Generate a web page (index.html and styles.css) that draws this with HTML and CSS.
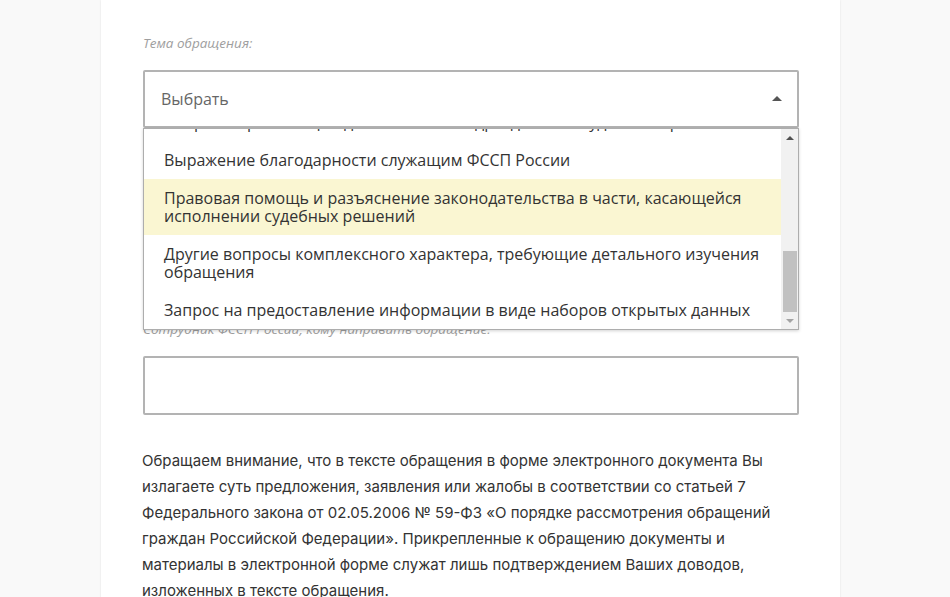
FILE: index.html
```html
<!DOCTYPE html>
<html lang="ru">
<head>
<meta charset="utf-8">
<title>Обращение</title>
<link rel="stylesheet" href="styles.css">
</head>
<body>
<div class="page">
  <div class="card">
    <div class="field">
      <div class="label">Тема обращения:</div>
      <div class="select-wrap">
        <div class="select">
          <span class="select-text">Выбрать</span>
          <span class="caret"></span>
        </div>
        <div class="dropdown">
          <ul class="options" id="options">
            <li class="option">Вопросы исполнительного производства</li>
            <li class="option">Обжалование действий (бездействия) должностных лиц ФССП России</li>
            <li class="option">Вопросы прохождения государственной службы в ФССП России</li>
            <li class="option">Сообщение о фактах коррупции в действиях должностных лиц ФССП России</li>
            <li class="option">Предложения по совершенствованию деятельности ФССП России</li>
            <li class="option">Вопросы организации деятельности подразделений судебных приставов</li>
            <li class="option">Выражение благодарности служащим ФССП России</li>
            <li class="option active">Правовая помощь и разъяснение законодательства в части, касающейся исполнении судебных решений</li>
            <li class="option">Другие вопросы комплексного характера, требующие детального изучения обращения</li>
            <li class="option">Запрос на предоставление информации в виде наборов открытых данных</li>
          </ul>
          <div class="scrollbar">
            <div class="sb-btn"><span class="sb-up"></span></div>
            <div class="sb-track"><div class="sb-thumb"></div></div>
            <div class="sb-btn"><span class="sb-down"></span></div>
          </div>
        </div>
      </div>
    </div>

    <div class="field field-second">
      <div class="label">Сотрудник ФССП России, кому направить обращение:</div>
      <div class="input"></div>
    </div>

    <p class="notice">Обращаем внимание, что в тексте обращения в форме электронного документа Вы излагаете суть предложения, заявления или жалобы в соответствии со статьей 7 Федерального закона от 02.05.2006 № 59-ФЗ «О порядке рассмотрения обращений граждан Российской Федерации». Прикрепленные к обращению документы и материалы в электронной форме служат лишь подтверждением Ваших доводов, изложенных в тексте обращения.</p>
  </div>
</div>
<script src="script.js"></script>
</body>
</html>
```

FILE: styles.css
```css
* { box-sizing: border-box; }

html, body {
  margin: 0;
  padding: 0;
  background: #f9f9f9;
  height: 100%;
  overflow: hidden;
}

.page {
  padding-left: 101px;
}

.card {
  width: 739px;
  min-height: 620px;
  background: #fff;
  box-shadow: 0 0 2px rgba(0, 0, 0, 0.1);
  padding: 34px 41px 0 42px;
  font-family: "Open Sans", "Liberation Sans", sans-serif;
}

.label {
  font-style: italic;
  font-size: 13.5px;
  line-height: 18px;
  color: #9e9e9e;
  margin-bottom: 18px;
}

.select-wrap {
  position: relative;
}

.select {
  height: 58px;
  border: 2px solid #b3b3b3;
  border-radius: 2px;
  display: flex;
  align-items: center;
  justify-content: space-between;
  padding: 0 15px 0 16px;
}

.select-text {
  font-size: 16px;
  color: #666;
}

.caret {
  width: 0;
  height: 0;
  border-left: 5px solid transparent;
  border-right: 5px solid transparent;
  border-bottom: 5px solid #555;
  margin-top: -2px;
}

.dropdown {
  position: absolute;
  top: 100%;
  left: 0;
  right: 0;
  height: 202px;
  background: #fff;
  border: 1px solid #adadad;
  box-shadow: 0 1px 3px rgba(0, 0, 0, 0.18);
  display: flex;
  z-index: 5;
}

.options {
  flex: 1;
  list-style: none;
  margin: 0;
  padding: 0;
  overflow: hidden;
}

.option {
  font-size: 16px;
  line-height: 18px;
  color: #333;
  padding: 10px 20px;
}

.option.active {
  background: #faf6d2;
}

.scrollbar {
  width: 17px;
  background: #f1f1f1;
  display: flex;
  flex-direction: column;
}

.sb-btn {
  height: 17px;
  display: flex;
  align-items: center;
  justify-content: center;
}

.sb-up {
  width: 0;
  height: 0;
  border-left: 4px solid transparent;
  border-right: 4px solid transparent;
  border-bottom: 4px solid #505050;
}

.sb-down {
  width: 0;
  height: 0;
  border-left: 4px solid transparent;
  border-right: 4px solid transparent;
  border-top: 4px solid #a3a3a3;
}

.sb-track {
  flex: 1;
  display: flex;
  flex-direction: column;
  justify-content: flex-end;
  padding: 0 1px 0 2px;
}

.sb-thumb {
  height: 61px;
  background: #c1c1c1;
}

.field-second {
  margin-top: 192px;
}

.input {
  height: 59px;
  border: 2px solid #b3b3b3;
  border-radius: 2px;
}

.notice {
  margin: 33px 0 0 -1px;
  font-family: Inter, "Noto Sans", sans-serif;
  font-size: 15px;
  line-height: 26px;
  color: #333;
}
```

FILE: script.js
```js
var list = document.getElementById('options');
list.scrollTop = list.scrollHeight;
```
